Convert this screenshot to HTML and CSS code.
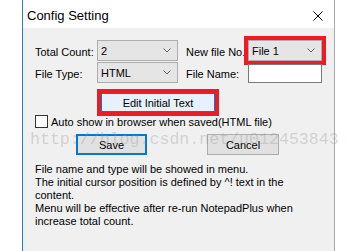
FILE: index.html
```html
<!DOCTYPE html>
<html lang="en">
<head>
    <meta charset="UTF-8" />
    <title>Config Setting</title>
    <link rel="stylesheet" href="styles.css">
</head>
<body>
    <div class="dialog">
        <div class="titlebar">
            <span class="title">Config Setting</span>
            <svg class="close" width="10" height="10" viewBox="0 0 10 10">
                <path d="M0.5 0.5 L9.5 9.5 M9.5 0.5 L0.5 9.5" stroke="#000" stroke-width="1" fill="none" />
            </svg>
        </div>

        <div class="content">
            <div class="row row-first">
                <span class="label">Total Count:</span>
                <div class="combo combo-small">
                    <span>2</span>
                    <svg class="chevron" width="8" height="5" viewBox="0 0 8 5"><path d="M0.5 0.5 L4 4 L7.5 0.5" stroke="#606060" fill="none" /></svg>
                </div>
                <span class="label label-right">New file No.</span>
                <div class="combo combo-file marked">
                    <span>File 1</span>
                    <svg class="chevron" width="8" height="5" viewBox="0 0 8 5"><path d="M0.5 0.5 L4 4 L7.5 0.5" stroke="#606060" fill="none" /></svg>
                </div>
            </div>

            <div class="row row-second">
                <span class="label">File Type:</span>
                <div class="combo combo-small">
                    <span>HTML</span>
                    <svg class="chevron" width="8" height="5" viewBox="0 0 8 5"><path d="M0.5 0.5 L4 4 L7.5 0.5" stroke="#606060" fill="none" /></svg>
                </div>
                <span class="label label-right">File Name:</span>
                <div class="textbox"></div>
            </div>

            <div class="row row-edit">
                <div class="btn btn-edit marked">Edit Initial Text</div>
            </div>

            <div class="check-row">
                <span class="checkbox"></span>
                <span>Auto show in browser when saved(HTML file)</span>
            </div>

            <div class="row row-actions">
                <div class="btn btn-save">Save</div>
                <div class="btn btn-cancel">Cancel</div>
            </div>

            <p class="note">File name and type will be showed in menu.<br>The initial cursor position is defined by ^! text in the<br>content.<br>Menu will be effective after re-run NotepadPlus when<br>increase total count.</p>
        </div>

        <div class="watermark">http://blog.csdn.net/u012453843</div>
    </div>
</body>
</html>
```

FILE: styles.css
```css
:root {
    --face: #f0f0f0;
    --border: #adadad;
    --combo-bg: #e5e5e5;
    --btn-bg: #e1e1e1;
    --accent: #0078d7;
    --mark: #ed1c24;
}
body {
    margin: 0;
    background: #ffffff;
    font-family: 'Liberation Sans', Arial, sans-serif;
    font-size: 11px;
    color: #000;
    overflow: hidden;
}
.dialog {
    position: relative;
    margin-left: 22px;
    width: 311px;
    height: 251px;
    background: var(--face);
    border-left: 1px solid #2b7bd6;
    border-right: 1px solid #a8a8a8;
}
.titlebar {
    height: 28px;
    background: #ffffff;
    display: flex;
    align-items: center;
    justify-content: space-between;
    padding: 0 11px 0 4px;
}
.title {
    font-size: 13px;
    margin-top: 2px;
}
.close {
    margin-top: 4px;
}
.content {
    padding-left: 12px;
}
.row {
    display: flex;
    align-items: center;
}
.row-first {
    margin-top: 12px;
    height: 21px;
}
.row-second {
    margin-top: 1px;
    height: 21px;
}
.label {
    width: 62px;
    padding-top: 2px;
}
.label-right {
    margin-left: 8px;
}
.combo {
    box-sizing: border-box;
    height: 21px;
    border: 1px solid var(--border);
    background: var(--combo-bg);
    display: flex;
    align-items: center;
    justify-content: space-between;
    padding: 0 6px 0 3px;
}
.combo-small {
    width: 81px;
}
.combo-file {
    width: 74px;
}
.marked {
    outline: 4px solid var(--mark);
}
.textbox {
    box-sizing: border-box;
    width: 74px;
    height: 19px;
    align-self: flex-end;
    background: #ffffff;
    border: 1px solid #7a7a7a;
}
.row-edit {
    margin-top: 10px;
}
.btn {
    box-sizing: border-box;
    height: 21px;
    background: var(--btn-bg);
    border: 1px solid var(--border);
    display: flex;
    align-items: center;
    justify-content: center;
}
.btn-edit {
    margin-left: 66px;
    width: 114px;
    height: 19px;
    background: #e5f1fb;
    border-color: var(--accent);
}
.check-row {
    display: flex;
    align-items: center;
    margin-top: 3px;
    height: 13px;
}
.checkbox {
    box-sizing: border-box;
    width: 13px;
    height: 13px;
    border: 1px solid #333;
    background: #fff;
    margin-right: 3px;
}
.row-actions {
    margin-top: 6px;
}
.btn-save {
    margin-left: 41px;
    width: 71px;
    border: 2px solid var(--accent);
}
.btn-cancel {
    margin-left: 60px;
    width: 72px;
}
.note {
    margin: 8px 0 0;
    line-height: 13px;
}
/* blog watermark laid over the dialog */
.watermark {
    position: absolute;
    left: 7px;
    top: 130px;
    font-family: 'Liberation Mono', 'Courier New', monospace;
    font-size: 16.6px;
    color: rgba(150, 150, 150, 0.35);
    white-space: nowrap;
    pointer-events: none;
}
```
